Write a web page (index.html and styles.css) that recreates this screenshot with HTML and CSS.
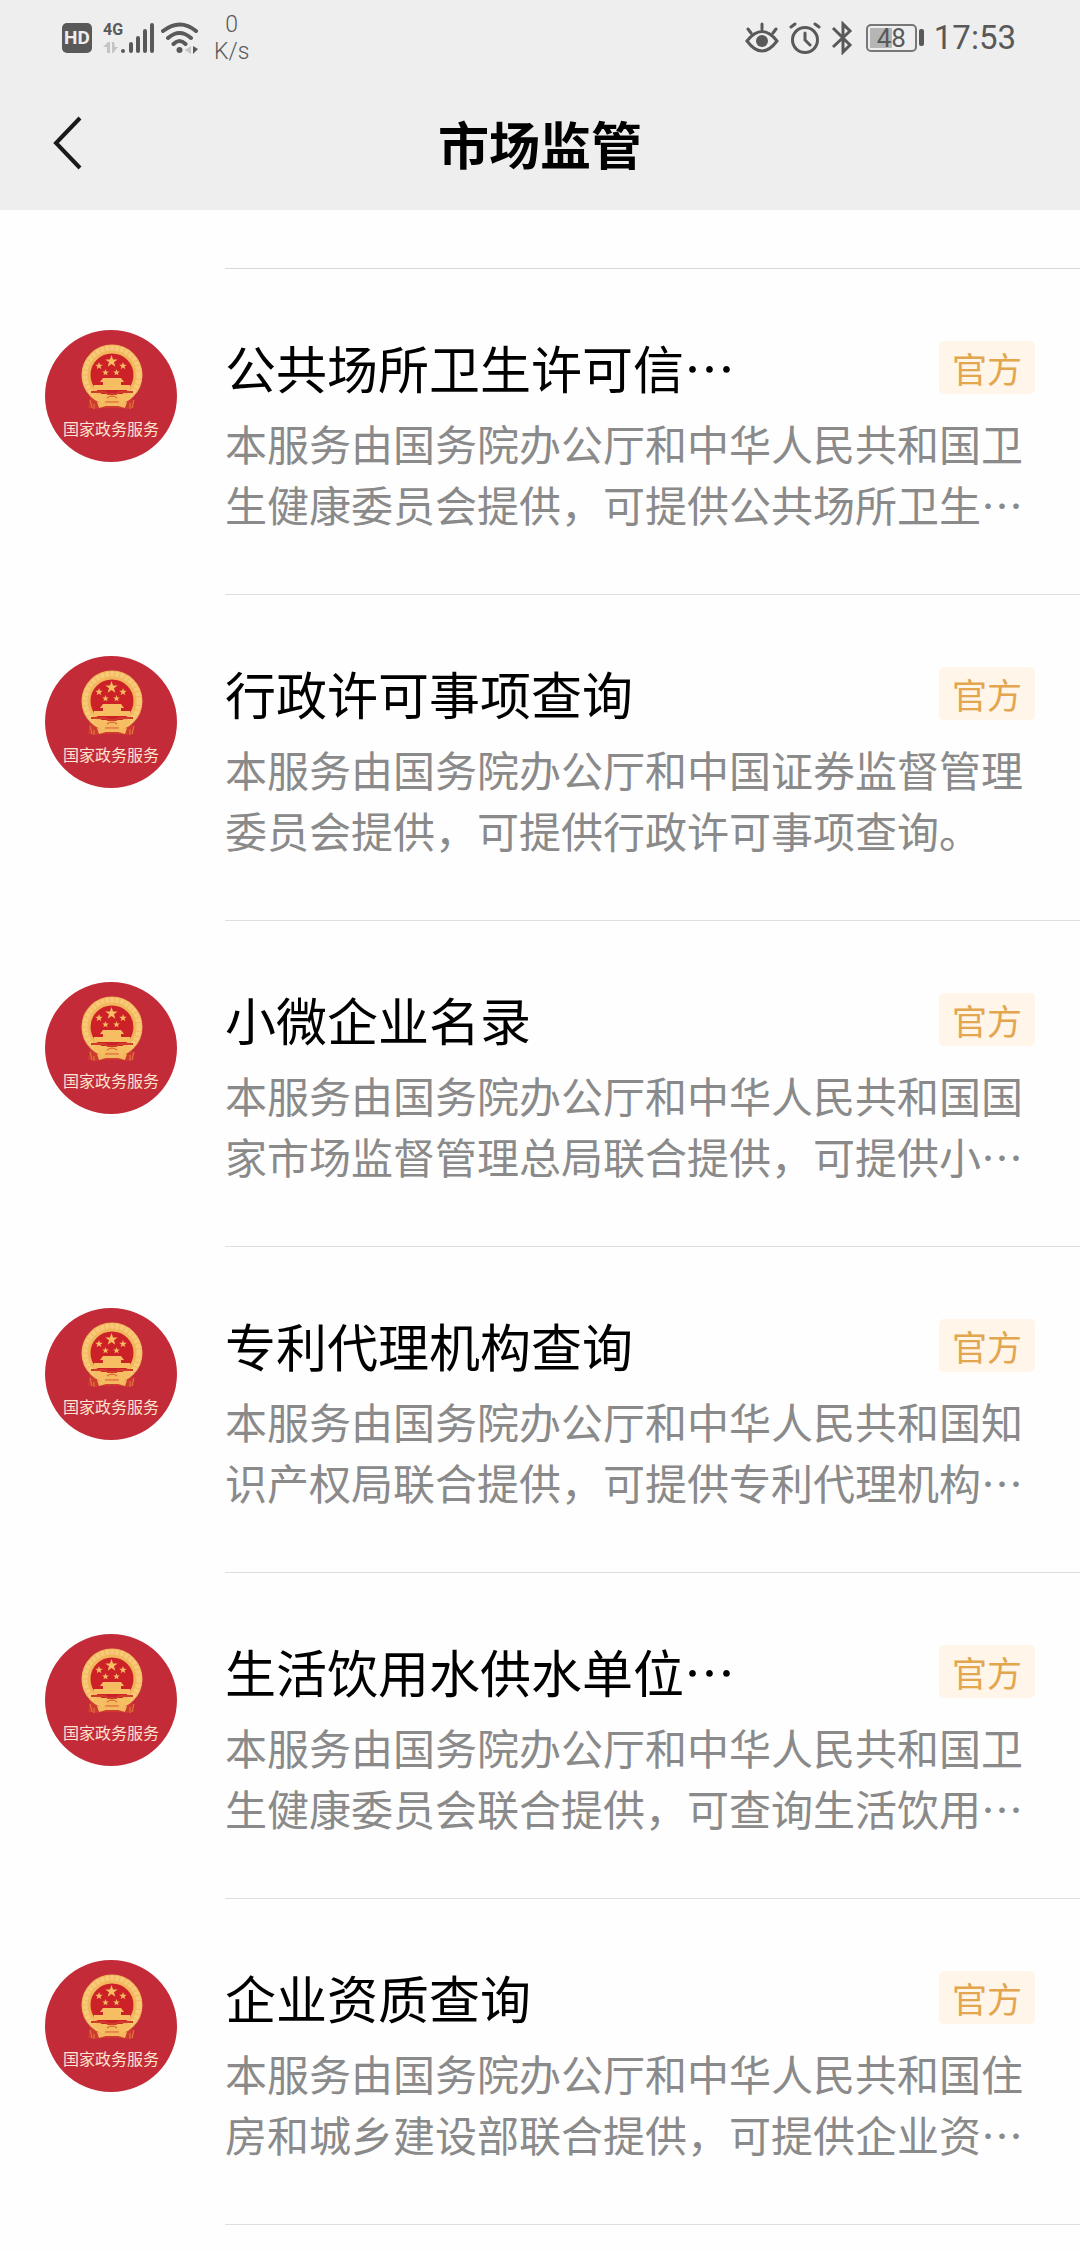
FILE: index.html
```html
<!DOCTYPE html>
<html lang="zh-CN">
<head>
<meta charset="utf-8">
<meta name="viewport" content="width=device-width, initial-scale=1">
<title>市场监管</title>
<link rel="stylesheet" href="styles.css">
</head>
<body>
<svg class="sprite" aria-hidden="true">
  <symbol id="star" viewBox="-10 -10 20 20"><path d="M0-10 2.4-3.2 9.5-3.1 3.8 1.2 5.9 8.1 0 4-5.9 8.1-3.8 1.2-9.5-3.1-2.4-3.2z"/></symbol>
  <symbol id="emblem" viewBox="0 0 70 68">
    <path d="M14 52h42l2 12-8 1-6-1H26l-6 1-8-1z" fill="#cf3a30"/>
    <circle cx="36" cy="31" r="26" fill="#cd2128" stroke="#f2b65c" stroke-width="9"/>
    <circle cx="36" cy="31" r="27" fill="none" stroke="#f8ca78" stroke-width="5" stroke-dasharray="4 1"/>
    <g fill="#f7bd62">
      <use href="#star" x="29" y="11" width="13" height="13"/>
      <use href="#star" x="19" y="18" width="8" height="8"/>
      <use href="#star" x="43" y="18" width="8" height="8"/>
      <use href="#star" x="26" y="25" width="7" height="7"/>
      <use href="#star" x="37" y="25" width="7" height="7"/>
      <path d="M27 34h18l3 4h-3v3h9v5H18v-5h9v-3h-3z"/>
      <path d="M16 50h40l-7 8H23z"/>
    </g>
    <path d="M15 48h14l3 2h8l3-2h14" stroke="#cf3a2a" stroke-width="2" fill="none"/>
    <path d="M29 54q7-6 14 0l-2 4H31zM21 58l9 1h12l9-1-2 6-7-2H30l-7 2z" fill="#f4b85e"/>
    <path d="M31 54q5-4 10 0M29 58h14" stroke="#d8542f" fill="none"/>
    <path d="M14 56l2 8M58 56l-2 8M18 60v5M54 59v6" stroke="#e2803f" fill="none"/>
  </symbol>
</svg>

<header class="top">
  <div class="status">
    <div class="status-group">
      <span class="hd">HD</span>
      <span class="cell">
        <span class="net">4G</span>
        <svg class="signal" width="52" height="32" viewBox="0 0 52 32" aria-hidden="true">
          <path d="M0 25l5-5h2v11H4v-6zM9 20h2l1 5h3l-5 6H9z" fill="#c4c4c4"/>
          <path d="M28 22v7M35 16v13M42 9v20M49 3v26" stroke="#595959" stroke-width="4" stroke-linecap="round"/>
          <circle cx="20" cy="29" r="2" fill="#595959"/>
        </svg>
      </span>
      <svg class="wifi" width="38" height="32" viewBox="0 0 38 32" fill="none" stroke="#595959" stroke-width="4" stroke-linecap="round" aria-hidden="true">
        <path d="M2 9q17-13 33 0M7 16q11.500-10 23 0M12.500 22q6-6 12 0"/>
        <circle cx="18.500" cy="28" r="3" fill="#595959" stroke="none"/>
        <path d="M30 24v8l-6-4z" fill="#c4c4c4" stroke="none"/><path d="M32 24v8l5-5z" fill="#595959" stroke="none"/>
      </svg>
      <span class="speed"><span>0</span><span>K/s</span></span>
    </div>
    <div class="status-group status-right">
      <svg width="34" height="32" viewBox="0 0 34 32" fill="none" stroke="#595959" stroke-width="3" stroke-linecap="round" aria-hidden="true">
        <path d="M2 19q15-19 30 0q-15 20-30 0zM17 2v5M3 7l3 4M31 7l-3 4"/><circle cx="17" cy="19" r="6" fill="#595959" stroke="none"/>
      </svg>
      <svg width="32" height="32" viewBox="0 0 32 32" fill="none" stroke="#595959" stroke-width="3" stroke-linecap="round" aria-hidden="true">
        <circle cx="16" cy="18" r="12.500"/><path d="M16 11v7l5 5M2 5l4-3M30 5l-4-3"/>
      </svg>
      <svg width="22" height="34" viewBox="0 0 22 34" fill="none" stroke="#595959" stroke-width="3" aria-hidden="true">
        <path d="M2 7l17 17-7 7V3l7 7L2 26"/>
      </svg>
      <span class="battery"><span class="cellbox">48</span><span class="nub"></span></span>
      <time class="clock">17:53</time>
    </div>
  </div>
  <nav class="nav">
    <button class="back" type="button" aria-label="返回">
      <svg width="30" height="54" viewBox="0 0 30 54" fill="none" stroke="#1a1a1a" stroke-width="4" aria-hidden="true"><path d="M28 2L4 27l24 25"/></svg>
    </button>
    <h1 class="heading">市场监管</h1>
  </nav>
</header>

<main>
  <ul class="list">
    <li class="item">
      <div class="avatar"><svg class="emblem" aria-hidden="true"><use href="#emblem"/></svg><span>国家政务服务</span></div>
      <div class="body"><div class="line"><h2>公共场所卫生许可信…</h2><span class="tag">官方</span></div>
      <p>本服务由国务院办公厅和中华人民共和国卫生健康委员会提供，可提供公共场所卫生…</p></div>
    </li>
    <li class="item">
      <div class="avatar"><svg class="emblem" aria-hidden="true"><use href="#emblem"/></svg><span>国家政务服务</span></div>
      <div class="body"><div class="line"><h2>行政许可事项查询</h2><span class="tag">官方</span></div>
      <p>本服务由国务院办公厅和中国证券监督管理委员会提供，可提供行政许可事项查询。</p></div>
    </li>
    <li class="item">
      <div class="avatar"><svg class="emblem" aria-hidden="true"><use href="#emblem"/></svg><span>国家政务服务</span></div>
      <div class="body"><div class="line"><h2>小微企业名录</h2><span class="tag">官方</span></div>
      <p>本服务由国务院办公厅和中华人民共和国国家市场监督管理总局联合提供，可提供小…</p></div>
    </li>
    <li class="item">
      <div class="avatar"><svg class="emblem" aria-hidden="true"><use href="#emblem"/></svg><span>国家政务服务</span></div>
      <div class="body"><div class="line"><h2>专利代理机构查询</h2><span class="tag">官方</span></div>
      <p>本服务由国务院办公厅和中华人民共和国知识产权局联合提供，可提供专利代理机构…</p></div>
    </li>
    <li class="item">
      <div class="avatar"><svg class="emblem" aria-hidden="true"><use href="#emblem"/></svg><span>国家政务服务</span></div>
      <div class="body"><div class="line"><h2>生活饮用水供水单位…</h2><span class="tag">官方</span></div>
      <p>本服务由国务院办公厅和中华人民共和国卫生健康委员会联合提供，可查询生活饮用…</p></div>
    </li>
    <li class="item">
      <div class="avatar"><svg class="emblem" aria-hidden="true"><use href="#emblem"/></svg><span>国家政务服务</span></div>
      <div class="body"><div class="line"><h2>企业资质查询</h2><span class="tag">官方</span></div>
      <p>本服务由国务院办公厅和中华人民共和国住房和城乡建设部联合提供，可提供企业资…</p></div>
    </li>
  </ul>
</main>
</body>
</html>
```
FILE: styles.css
```css
* { box-sizing: border-box; }
body {
  margin: 0;
  background: #fefefe;
  color: #000;
  font-family: "Noto Sans CJK SC", sans-serif;
}
h1, h2, p, ul { margin: 0; padding: 0; }
svg { display: block; flex: none; }
.sprite { position: absolute; width: 0; height: 0; }

.top { background: #eee; }
.status {
  display: flex;
  justify-content: space-between;
  height: 80px;
  padding: 0 64px 0 62px;
  color: #595959;
  font-family: Roboto, sans-serif;
}
.status-group { display: flex; align-items: center; height: 75px; }
.hd {
  width: 30px;
  border-radius: 5px;
  background: #595959;
  color: #eee;
  font-size: 19px;
  font-weight: 700;
  line-height: 30px;
  text-align: center;
}
.cell { display: grid; margin-left: 11px; }
.cell > * { grid-area: 1 / 1; }
.net {
  font-family: "Liberation Sans Narrow", Roboto, sans-serif;
  font-size: 16px;
  font-weight: 700;
  line-height: 16px;
}
.wifi { margin-left: 6px; }
.speed {
  display: flex;
  flex-direction: column;
  align-items: center;
  margin-left: 15px;
  font-size: 23px;
  line-height: 27px;
  font-weight: 300;
}
.status-right { gap: 10px; }
.battery { display: flex; align-items: center; gap: 2px; margin-left: 3px; }
.cellbox {
  width: 51px;
  border: 2px solid #777;
  border-radius: 5px;
  background: linear-gradient(90deg, #b5b5b5 50%, transparent 50%) content-box;
  padding: 2px;
  font-size: 26px;
  line-height: 20px;
  text-align: center;
}
.nub { width: 5px; height: 17px; border-radius: 2px; background: #595959; }
.clock { font-size: 33px; line-height: 40px; }

.nav {
  display: grid;
  grid-template-columns: 1fr auto 1fr;
  align-items: center;
  height: 130px;
  padding: 0 52px 5px;
}
.back { justify-self: start; padding: 0; border: 0; background: none; }
.heading { font-size: 51px; font-weight: 700; line-height: 72px; }

.list { padding-top: 58px; list-style: none; }
.list::before {
  content: "";
  display: block;
  height: 1px;
  margin-left: 225px;
  background: #d9d9d9;
}
.item { display: flex; padding-left: 45px; }
.avatar {
  display: flex;
  flex: none;
  flex-direction: column;
  align-items: center;
  width: 132px;
  height: 132px;
  margin-top: 61px;
  padding-top: 14px;
  border-radius: 50%;
  background: #c32b38;
  color: #fbe3cf;
  font-size: 16px;
  line-height: 24px;
  white-space: nowrap;
}
.emblem { width: 70px; height: 68px; margin-bottom: 4px; }
.body {
  flex: 1;
  margin-left: 48px;
  padding: 58px 45px 60px 0;
  border-bottom: 1px solid #dedede;
}
.line { display: flex; align-items: center; justify-content: space-between; margin-bottom: 5px; }
h2 { font-size: 51px; font-weight: 400; line-height: 80px; }
.tag {
  width: 96px;
  border-radius: 5px;
  background: #fff5e8;
  color: #e2a64f;
  font-size: 35px;
  line-height: 53px;
  text-align: center;
}
p { color: #8a8a8a; font-size: 42px; line-height: 61px; }
```
